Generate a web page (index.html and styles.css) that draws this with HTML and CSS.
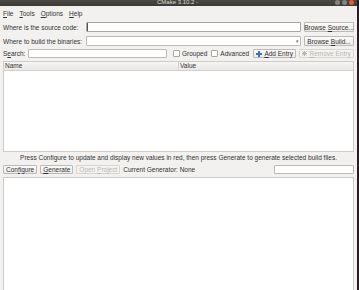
FILE: index.html
```html
<!DOCTYPE html>
<html>
<head>
<meta charset="utf-8">
<link rel="stylesheet" href="styles.css">
</head>
<body>
<div class="window">
  <div class="titlebar">
    <span class="title">CMake 3.10.2 -</span>
    <div class="wbtns">
      <span class="wb"></span><span class="wb"></span><span class="wb close"></span>
    </div>
  </div>
  <div class="menubar">
    <span><u>F</u>ile</span><span><u>T</u>ools</span><span><u>O</u>ptions</span><span><u>H</u>elp</span>
  </div>
  <div class="paths">
    <span class="lbl">Where is the source code:</span>
    <div class="input focus"></div>
    <div class="btn"><span>Browse <u>S</u>ource...</span></div>
    <span class="lbl">Where to build the binaries:</span>
    <div class="input combo"><span class="arrow">&#9662;</span></div>
    <div class="btn"><span>Browse <u>B</u>uild...</span></div>
  </div>
  <div class="searchrow">
    <span class="lbl">S<u>e</u>arch:</span>
    <div class="input search"></div>
    <span class="check"></span><span class="lbl">Grouped</span>
    <span class="check adv"></span><span class="lbl">Advanced</span>
    <div class="btn add"><svg width="6" height="6" viewBox="0 0 6 6"><path d="M2 0h2v2h2v2h-2v2h-2v-2h-2v-2h2z" fill="#3f6fc0"/></svg><span><u>A</u>dd Entry</span></div>
    <div class="btn remove disabled"><svg width="5" height="5" viewBox="0 0 5 5"><path d="M0.5 0.5L4.5 4.5M4.5 0.5L0.5 4.5M0 2.5h5M2.5 0v5" stroke="#b9b6b2" stroke-width="1"/></svg><span><u>R</u>emove Entry</span></div>
  </div>
  <div class="table">
    <div class="thead"><span class="col name">Name</span><span class="col value">Value</span></div>
  </div>
  <div class="status">Press Configure to update and display new values in red, then press Generate to generate selected build files.</div>
  <div class="actions">
    <div class="btn"><span>Con<u>f</u>igure</span></div>
    <div class="btn"><span><u>G</u>enerate</span></div>
    <div class="btn disabled"><span>Open <u>P</u>roject</span></div>
    <span class="lbl gen">Current Generator: None</span>
    <div class="input geninput"></div>
  </div>
  <div class="output"></div>
</div>
</body>
</html>
```
FILE: styles.css
```css
html, body {
  margin: 0;
  padding: 0;
}
body {
  width: 359px;
  height: 290px;
  overflow: hidden;
  background: #2e1a26;
  font-family: "Liberation Sans", Arial, sans-serif;
  font-size: 6.5px;
  color: #333;
}
.window {
  width: 357px;
  height: 290px;
  background: #f2f1f0;
  display: flex;
  flex-direction: column;
  overflow: hidden;
}
.titlebar {
  height: 6px;
  flex: none;
  background: linear-gradient(#4a4944, #3c3b37);
  position: relative;
  display: flex;
  justify-content: center;
  overflow: hidden;
}
.title {
  color: #dfdbd2;
  font-size: 6px;
  line-height: 5px;
  margin-left: -2px;
}
.wbtns {
  position: absolute;
  right: 3px;
  top: 0px;
  display: flex;
  gap: 2px;
}
.wb {
  width: 5px;
  height: 5px;
  border-radius: 50%;
  background: #85847f;
}
.wb.close {
  background: #e9592d;
}
.menubar {
  height: 14px;
  flex: none;
  display: flex;
  align-items: center;
  gap: 6px;
  padding-left: 3px;
  padding-top: 1px;
  box-sizing: border-box;
}
.paths {
  display: grid;
  grid-template-columns: 80px 1fr 50px;
  column-gap: 3px;
  row-gap: 4px;
  align-items: center;
  padding: 2px 3px 0 3px;
}
.lbl {
  white-space: nowrap;
}
.input {
  height: 10px;
  box-sizing: border-box;
  background: #fff;
  border: 1px solid #bdb9b4;
  border-radius: 1px;
  position: relative;
}
.input.focus {
  border-color: #a9a5a0;
  box-shadow: inset 1px 0 0 #555;
}
.combo .arrow {
  position: absolute;
  right: 1px;
  top: 0;
  font-size: 5px;
  line-height: 8px;
  color: #666;
}
.btn {
  height: 10px;
  box-sizing: border-box;
  border: 1px solid #bdb9b4;
  border-radius: 1px;
  background: linear-gradient(#fbfbfa, #ecebe9);
  display: flex;
  align-items: center;
  justify-content: center;
  gap: 2px;
  white-space: nowrap;
  padding: 0 2px;
}
.btn.disabled {
  color: #b9b6b2;
  border-color: #d9d6d2;
  background: #f4f3f2;
}
.searchrow {
  display: flex;
  align-items: center;
  padding: 3px 3px 0 3px;
  height: 9px;
}
.search {
  width: 139px;
  height: 9px;
  margin-left: 3px;
}
.check {
  width: 5px;
  height: 5px;
  border: 1px solid #a9a5a0;
  background: #fff;
  border-radius: 1px;
  margin-left: 6px;
  margin-right: 2px;
}
.check.adv {
  margin-left: 4px;
}
.searchrow .btn.add {
  width: 43px;
  height: 9px;
  margin-left: 4px;
}
.searchrow .btn.remove {
  width: 55px;
  height: 9px;
  margin-left: 3px;
}
.table {
  margin: 3px 3px 0 3px;
  height: 91px;
  flex: none;
  background: #fff;
  border: 1px solid #cfccc8;
  box-sizing: border-box;
}
.thead {
  height: 9px;
  display: flex;
  background: linear-gradient(#f6f5f4, #e9e8e6);
  border-bottom: 1px solid #d3d0cc;
  box-sizing: border-box;
}
.col {
  line-height: 8px;
  padding-left: 1px;
}
.col.name {
  width: 173px;
  border-right: 1px solid #d3d0cc;
}
.col.value {
  flex: 1;
  padding-left: 1px;
}
.status {
  text-align: center;
  height: 12px;
  line-height: 12px;
  white-space: nowrap;
}
.actions {
  display: flex;
  align-items: center;
  padding: 1px 3px 0 3px;
  gap: 3px;
}
.actions .btn {
  height: 9px;
}
.gen {
  flex: 1;
}
.geninput {
  width: 80px;
  height: 9px;
}
.output {
  margin: 3px 3px 0 3px;
  flex: 1;
  background: #fff;
  border: 1px solid #cfccc8;
  border-bottom: none;
}
```
